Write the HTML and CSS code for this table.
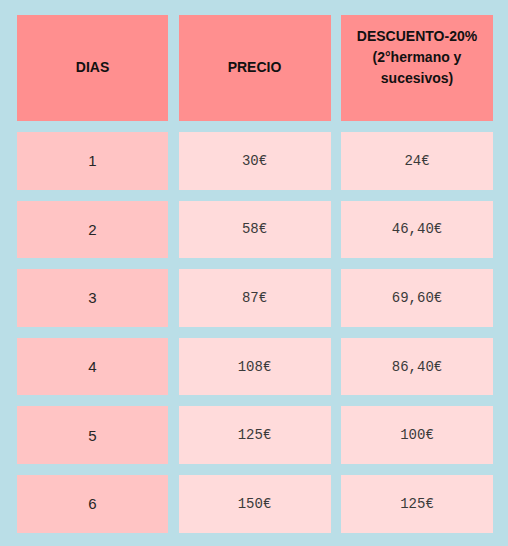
FILE: index.html
```html
<!DOCTYPE html>
<html lang="es">
<head>
<meta charset="utf-8">
<title>Precios</title>
<link rel="stylesheet" href="styles.css">
</head>
<body>
<div class="page">
  <div class="grid">
    <div class="cell head">DIAS</div>
    <div class="cell head">PRECIO</div>
    <div class="cell head head-tall">DESCUENTO-20%<br>(2°hermano y<br>sucesivos)</div>

    <div class="cell day">1</div>
    <div class="cell price">30€</div>
    <div class="cell price">24€</div>

    <div class="cell day">2</div>
    <div class="cell price">58€</div>
    <div class="cell price">46,40€</div>

    <div class="cell day">3</div>
    <div class="cell price">87€</div>
    <div class="cell price">69,60€</div>

    <div class="cell day">4</div>
    <div class="cell price">108€</div>
    <div class="cell price">86,40€</div>

    <div class="cell day">5</div>
    <div class="cell price">125€</div>
    <div class="cell price">100€</div>

    <div class="cell day">6</div>
    <div class="cell price">150€</div>
    <div class="cell price">125€</div>
  </div>
</div>
</body>
</html>
```
FILE: styles.css
```css
html, body {
  margin: 0;
  padding: 0;
  background: #badee7;
}
.page {
  width: 508px;
  height: 546px;
  box-sizing: border-box;
  padding: 15px 0 0 17px;
}
.grid {
  display: grid;
  grid-template-columns: 151px 152px 152px;
  grid-template-rows: 106px repeat(6, 57.6px);
  column-gap: 10.5px;
  row-gap: 11px;
}
.cell {
  display: flex;
  align-items: center;
  justify-content: center;
  text-align: center;
  color: #222;
}
.head {
  background: #ff8f8f;
  font-family: "Liberation Sans", Arial, sans-serif;
  font-weight: bold;
  font-size: 14px;
  line-height: 21px;
  color: #111;
  padding-bottom: 1px;
}
.head-tall {
  padding-bottom: 22px;
}
.day {
  background: #ffc4c4;
  font-family: "Liberation Sans", Arial, sans-serif;
  font-size: 15px;
  color: #262626;
}
.price {
  background: #ffdbdb;
  font-family: "Liberation Mono", "Courier New", monospace;
  font-size: 14px;
  color: #3a3a3a;
}
```
